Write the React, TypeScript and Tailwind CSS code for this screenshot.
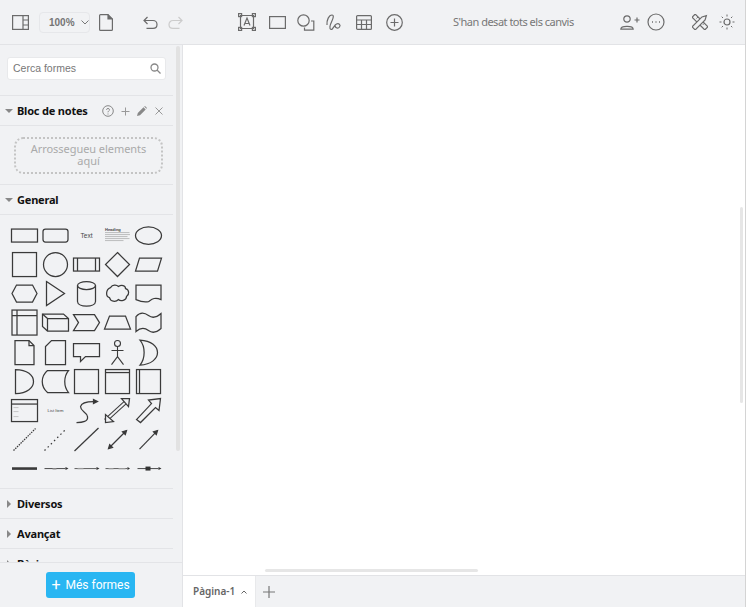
import React from "react";

const G = "#6b6b6b";

function Ico({ w, h, ml = 0, children, vb }: { w: number; h: number; ml?: number; vb?: string; children: React.ReactNode }) {
  return (
    <svg width={w} height={h} viewBox={vb ?? `0 0 ${w} ${h}`} fill="none" stroke={G} strokeWidth={1.2} style={{ marginLeft: ml, flex: "none" }}>
      {children}
    </svg>
  );
}

function Cell({ children }: { children?: React.ReactNode }) {
  return (
    <svg viewBox="-15.5 -14.5 31 29" className="w-[31px] h-[29.125px]" fill="none" stroke="#3a3a3a" strokeWidth={1.25}>
      {children}
    </svg>
  );
}

const shapes: React.ReactNode[] = [
  <rect x={-13} y={-6.5} width={26} height={13} />,
  <rect x={-12.5} y={-6.5} width={25} height={13} rx={2.5} />,
  <text x={0} y={2} textAnchor="middle" fontSize={6.5} fill="#444" stroke="none" fontFamily="Liberation Sans, sans-serif">Text</text>,
  <g>
    <text x={-12.5} y={-5} fontSize={4} fontWeight={700} fill="#444" stroke="none" fontFamily="Liberation Sans, sans-serif">Heading</text>
    <path d="M-12.5-3H12M-12.5-1H12.5M-12.5 1H10M-12.5 3H12M-12.5 5H6" stroke="#888" strokeWidth={.5} />
  </g>,
  <ellipse cx={0} cy={0} rx={13} ry={8.7} />,

  <rect x={-12} y={-12} width={24} height={24} />,
  <circle r={12} />,
  <g><rect x={-13} y={-6.500} width={26} height={13} /><path d="M-9-6.500V6.500M9-6.500V6.500" /></g>,
  <path d="M0-12 12 0 0 12-12 0Z" />,
  <path d="M-9-6.500H13L9 6.500H-13Z" />,

  <path d="M-8-8.500H8L12.500 0 8 8.500H-8L-12.500 0Z" />,
  <path d="M-9-12 9 0-9 12Z" />,
  <g><path d="M-9-8V8C-9 14 9 14 9 8V-8" /><ellipse rx={9} ry={4} cy={-8} /></g>,
  <path d="M-7-6C-5-9-1-9 1-7 4-9 8-8 8-5 12-4 12 1 9 3 9 7 3 8 1 6-2 9-7 8-8 4-12 3-12-4-7-6Z" />,
  <path d="M-12.500-8.500H12.500V6C6 3 3 6 0 8-4 9-8 8-12.500 6Z" />,

  <g><rect x={-12.500} y={-12.500} width={25} height={25} /><path d="M-12.500-7H12.500M-7.500-12.500V12.500" /></g>,
  <g><path d="M-12-8.500H8L13-4V8.500H-8L-13 4V-8.500Z" /><path d="M-8-4H13M-8-4V8.500M-13-8.500-8-4" /></g>,
  <path d="M-13-8H8L13 0 8 8H-13L-8 0Z" />,
  <path d="M-8-6.500H8L13 6.500H-13Z" />,
  <path d="M-12.500-6C-8-11-4-10 0-7 4-4 8-5 12.500-9V6C8 10 4 11 0 8-4 5-8 5-12.500 9Z" />,

  <g><path d="M-9.500-12H4.500L9.500-7V12H-9.500Z" /><path d="M4.500-12V-7H9.500" /></g>,
  <path d="M-4-12H10V12H-10V-6Z" />,
  <path d="M-13-9H13V4H-1L-6 9V4H-13Z" />,
  <g strokeWidth={1.1}><circle cy={-9} r={3} /><path d="M0-6V4M-6-2H6M0 4-6 12M0 4 6 12" /></g>,
  <path d="M-8.500-12.500C3-12 9-6 9 0 9 6 3 12-8.500 12.500-3 6-3-6-8.500-12.500Z" />,

  <path d="M-9-12C3-12 9-6 9 0 9 6 3 12-9 12Z" />,
  <path d="M-8-11H13C8-5 8 5 13 11H-8C-15 5-15-5-8-11Z" />,
  <rect x={-12} y={-12} width={24} height={24} />,
  <g><rect x={-12} y={-12} width={24} height={24} /><path d="M-12-9H12" /></g>,
  <g><rect x={-12} y={-12} width={24} height={24} /><path d="M-9-12V12" /></g>,

  <g><rect x={-13} y={-11} width={26} height={22} /><path d="M-13-6.500H13" /><path d="M-11-3H-6M-11 1H-6M-11 6H-6" stroke="#aaa" strokeWidth={.6} /></g>,
  <text x={0} y={1.500} textAnchor="middle" fontSize={4.200} fill="#444" stroke="none" fontFamily="Liberation Sans, sans-serif">List Item</text>,
  <g><path d="M-10 12C-4 12 2 11 1 6 0 1-6 1-6-4-5-8 0-9 7-9" /><path d="M7-11 11-9 7-7Z" fill="#333" /></g>,
  <g><path d="M-12 10 10-10" strokeWidth={4} /><path d="M-12 10 10-10" stroke="#f1f2f4" strokeWidth={2} /><path d="M4-12 12-12 11-4ZM-12 4-12 12-4 11Z" fill="#f1f2f4" /></g>,
  <path d="M-12 9-8 12 7-3 10.500 0 12-12 0-10.500 3-7Z" />,

  <path d="M-11 11 11-11" strokeDasharray="1.500 1" />,
  <path d="M-11 11 11-11" strokeDasharray="1.500 3" />,
  <path d="M-12 11.500 12-11.500" />,
  <g><path d="M-7 7 7-7" /><path d="M9-9 5-7.800 7.800-5ZM-9 9-5 7.800-7.800 5Z" fill="#333" /></g>,
  <g><path d="M-9 9.500 7-7" /><path d="M9-9 5-7.800 7.800-5Z" fill="#333" /></g>,

  <path d="M-12.500 0H12.500" strokeWidth={2.600} />,
  <g><path d="M-11 0H10" strokeWidth={.9} /><path d="M10-1.500 13 0 10 1.500Z" fill="#333" stroke="none" /><path d="M-3 .500H1" stroke="#aaa" /></g>,
  <g><path d="M-12 0H10" strokeWidth={.8} /><path d="M10-1.500 13 0 10 1.500Z" fill="#333" stroke="none" /><path d="M-9 0H-3" stroke="#999" /></g>,
  <g><path d="M-12 0H10" strokeWidth={.8} /><path d="M10-1.500 12.500 0 10 1.500Z" fill="#333" stroke="none" /><path d="M-9-.0H-4M1 0H8" stroke="#999" /></g>,
  <g><path d="M-11 0H10" strokeWidth={.9} /><rect x={-3} y={-2} width={5} height={4} fill="#333" stroke="none" /><path d="M10-1.500 13 0 10 1.500Z" fill="#333" stroke="none" /></g>,
];

function Caret({ open }: { open?: boolean }) {
  return open ? (
    <span className="w-0 h-0 border-l-[4px] border-r-[4px] border-t-[4px] border-l-transparent border-r-transparent border-t-[#888]" />
  ) : (
    <span className="w-0 h-0 border-t-[4px] border-b-[4px] border-l-[4px] border-t-transparent border-b-transparent border-l-[#888] ml-[2px] mr-[2px]" />
  );
}

function Section({ title, open }: { title: string; open?: boolean }) {
  return (
    <div className="flex items-center h-[30px] border-b border-[#e3e4e7] pl-[5px] pt-[1px] shrink-0 w-[173px]">
      <span className="w-[12px] flex"><Caret open={open} /></span>
      <span className="text-[11px] font-bold text-[#111] whitespace-nowrap tracking-[-0.2px]">{title}</span>
    </div>
  );
}

export default function App() {
  return (
    <div className="w-[746px] h-[607px] flex flex-col overflow-hidden bg-[#f1f2f4] border-r border-[#d4d4d4] font-['Noto_Sans',sans-serif]">
      <header className="h-[45px] shrink-0 flex items-center border-b border-[#e2e3e6]">
        <Ico w={17} h={15} ml={12}>
          <rect x={.6} y={.6} width={15.800} height={13.800} /><path d="M11 .6V14.400M11 5H16.400M11 10H16.400" />
        </Ico>
        <div className="ml-[10px] w-[51px] h-[21px] shrink-0 flex items-center border border-[#e6e7ea] rounded-[4px] pl-[9px]">
          <span className="text-[10px] text-[#555] font-['Liberation_Sans',sans-serif] font-bold opacity-80">100%</span>
          <svg width="8" height="5" viewBox="0 0 8 5" fill="none" stroke="#777" strokeWidth="1" className="ml-[6px]"><path d="M.5.5 4 4 7.500.5" /></svg>
        </div>
        <Ico w={14} h={17} ml={9}>
          <path d="M.6 1.500Q.6.6 1.500.6H9L13.400 5V15.500Q13.400 16.400 12.500 16.400H1.500Q.6 16.400.6 15.500Z" /><path d="M9 .6V5H13.400" fill={G} />
        </Ico>
        <Ico w={15} h={13} ml={30}>
          <path d="M1 4.500H10C12.500 4.500 14 6.500 14 8.500 14 10.500 12.500 12.400 10 12.400H3.500M4.500 1 1 4.500 4.500 8" />
        </Ico>
        <svg width="15" height="13" viewBox="0 0 15 13" fill="none" stroke="#ccc" strokeWidth="1.200" className="ml-[10px] shrink-0">
          <path d="M14 4.500H5C2.500 4.500 1 6.500 1 8.500 1 10.500 2.500 12.400 5 12.400H11.500M10.500 1 14 4.500 10.500 8" />
        </svg>
        <Ico w={18} h={18} ml={55}>
          <path d="M2.500 2.500H15.500V15.500H2.500Z" />
          <rect x={.6} y={.6} width={3} height={3} /><rect x={14.400} y={.6} width={3} height={3} /><rect x={.6} y={14.400} width={3} height={3} /><rect x={14.400} y={14.400} width={3} height={3} />
          <path d="M6 12.500 9 5 12 12.500M7 10.500H11" />
        </Ico>
        <Ico w={17} h={13} ml={13}><rect x={.6} y={.6} width={15.800} height={11.800} /></Ico>
        <Ico w={18} h={17} ml={11}>
          <circle cx={6.500} cy={6.500} r={5.700} /><path d="M14 7H16.800V16.200H7.500V13.500" />
        </Ico>
        <Ico w={16} h={17} ml={11}>
          <path d="M1 11C.5 6 3 1 6 1 8 1 7.500 4 5.500 8 4 11 3 15 5 15.500 7 16 8 11 10.500 10 13 9 15 11 13.500 13 12 15 9.500 14 9 12" />
        </Ico>
        <Ico w={16} h={15} ml={14}>
          <rect x={.6} y={.6} width={14.800} height={13.800} rx={1} /><path d="M.6 5H15.400M.6 9.500H15.400M5.500 5V14.400M10.500 5V14.400" />
        </Ico>
        <Ico w={17} h={17} ml={14}>
          <circle cx={8.500} cy={8.500} r={7.800} /><path d="M4.500 8.500H12.500M8.500 4.500V12.500" />
        </Ico>
        <span className="ml-[50px] w-[121px] shrink-0 text-[11px] tracking-[-0.5px] text-[#777] whitespace-nowrap">S'han desat tots els canvis</span>
        <Ico w={20} h={15} ml={46}>
          <circle cx={7} cy={4} r={3.200} /><path d="M.8 14.200C.8 10.500 13.200 10.500 13.200 14.200Z" /><path d="M14.500 5H19.500M17 2.500V7.500" />
        </Ico>
        <Ico w={18} h={18} ml={7}>
          <circle cx={9} cy={9} r={8} /><path d="M5 9H6M8.500 9H9.500M12 9H13" strokeWidth={1.400} />
        </Ico>
        <Ico w={16} h={16} ml={27}>
          <g transform="rotate(45 8 8)"><rect x={-1} y={5.800} width={18} height={4.400} /><path d="M3 5.800V8M6 5.800V8M9 5.800V8M12 5.800V8" strokeWidth={.9} /></g>
          <g transform="rotate(-45 8 8)"><path d="M-1 5.800H13L17 8 13 10.200H-1Z" fill="#f1f2f4" /></g>
        </Ico>
        <Ico w={16} h={16} ml={11}>
          <circle cx={8} cy={8} r={3} /><path d="M8 .5V2.500M8 13.500V15.500M.5 8H2.500M13.500 8H15.500M2.700 2.700 4 4M12 12 13.300 13.300M13.300 2.700 12 4M4 12 2.700 13.300" strokeWidth={1} />
        </Ico>
      </header>

      <div className="flex-1 flex min-h-0">
        <aside className="w-[183px] shrink-0 flex flex-col border-r border-[#e2e3e6] relative">
          <div className="absolute left-[176px] top-[1px] w-[4px] h-[405px] rounded-[2px] bg-[#e2e2e2]" />
          <div className="flex-1 min-h-0 overflow-hidden">
            <div className="h-[51px] w-[173px] border-b border-[#e3e4e7] pt-[12px] pl-[7px]">
              <div className="w-[159px] h-[23px] rounded-[3px] bg-white flex items-center justify-between pl-[5px] pr-[4px] border border-[#e8e9eb]">
                <span className="text-[10.500px] text-[#777] font-['Liberation_Sans',sans-serif]">Cerca formes</span>
                <svg width="11" height="11" viewBox="0 0 11 11" fill="none" stroke="#888" strokeWidth="1.300"><circle cx="4.500" cy="4.500" r="3.500" /><path d="M7 7 10.500 10.500" /></svg>
              </div>
            </div>
            <div className="flex items-center h-[30px] border-b border-[#e3e4e7] pl-[5px] pt-[1px] w-[173px]">
              <span className="w-[12px] flex"><Caret open /></span>
              <span className="text-[11px] font-bold text-[#111] whitespace-nowrap tracking-[-0.2px]">Bloc de notes</span>
              <svg width="12" height="12" viewBox="0 0 12 12" fill="none" stroke="#888" strokeWidth="1" className="ml-[14px] shrink-0"><circle cx="6" cy="6" r="5.300" /><path d="M4.500 4.800C4.500 3 7.500 3 7.500 4.800 7.500 6 6 6 6 7.300M6 8.500V9.500" /></svg>
              <svg width="9" height="9" viewBox="0 0 9 9" stroke="#999" strokeWidth="1" className="ml-[7px] shrink-0"><path d="M4.500.5V8.500M.5 4.500H8.500" /></svg>
              <svg width="10" height="10" viewBox="0 0 10 10" fill="#888" className="ml-[7px] shrink-0"><path d="M0 10 .8 7 6.500 1.300 8.700 3.500 3 9.200ZM7.200.6 8 0 10 2 9.400 2.800Z" /></svg>
              <svg width="8" height="8" viewBox="0 0 8 8" stroke="#999" strokeWidth="1" className="ml-[8px] shrink-0"><path d="M.5.5 7.500 7.500M7.500.5.5 7.500" /></svg>
            </div>
            <div className="h-[59px] w-[173px] border-b border-[#e3e4e7] pt-[11px] pl-[14px]">
              <div className="w-[149px] h-[37px] pb-[2px] rounded-[9px] border-2 border-dotted border-[#c4c4c4] flex items-center justify-center text-center text-[11px] leading-[12px] text-[#aaa] tracking-[-0.05px]">
                Arrossegueu elements<br />aquí
              </div>
            </div>
            <Section title="General" open />
            <div className="h-[274px] w-[173px] border-b border-[#e3e4e7] pt-[6px] pl-[9px]">
              <div className="grid grid-cols-[repeat(5,31px)] auto-rows-[29.125px]">
                {shapes.map((s, i) => <Cell key={i}>{s}</Cell>)}
              </div>
            </div>
            <Section title="Diversos" />
            <Section title="Avançat" />
            <Section title="Bàsic" />
          </div>
          <div className="h-[45px] shrink-0 border-t border-[#e3e4e7] flex justify-center items-start pt-[9px] pr-[1px] bg-[#f1f2f4]">
            <div className="w-[89px] h-[26px] rounded-[3px] bg-[#29b6f2] text-white text-[12px] flex items-center justify-center font-['Roboto',sans-serif]">
              <span className="text-[16px] mr-[5px] leading-none">+</span>Més formes
            </div>
          </div>
        </aside>

        <main className="flex-1 min-w-0 flex flex-col">
          <div className="flex-1 bg-white relative">
            <div className="absolute left-[557px] top-[162px] w-[3px] h-[196px] rounded-[2px] bg-[#e6e6e6]" />
            <div className="absolute left-[82px] bottom-[3px] w-[213px] h-[3px] rounded-[2px] bg-[#e6e6e6]" />
          </div>
          <div className="h-[32px] shrink-0 flex border-t border-[#e2e3e6]">
            <div className="w-[73px] bg-white flex items-center pl-[10px] border-r border-[#e8e9eb]">
              <span className="text-[10px] font-semibold text-[#666]">Pàgina-1</span>
              <svg width="6" height="4" viewBox="0 0 6 4" fill="none" stroke="#666" strokeWidth="1" className="ml-[6px]"><path d="M.5 3.500 3 1 5.500 3.500" /></svg>
            </div>
            <svg width="12" height="12" viewBox="0 0 12 12" stroke="#777" strokeWidth="1.200" className="ml-[7px] self-center"><path d="M6 0V12M0 6H12" /></svg>
          </div>
        </main>
      </div>
    </div>
  );
}
